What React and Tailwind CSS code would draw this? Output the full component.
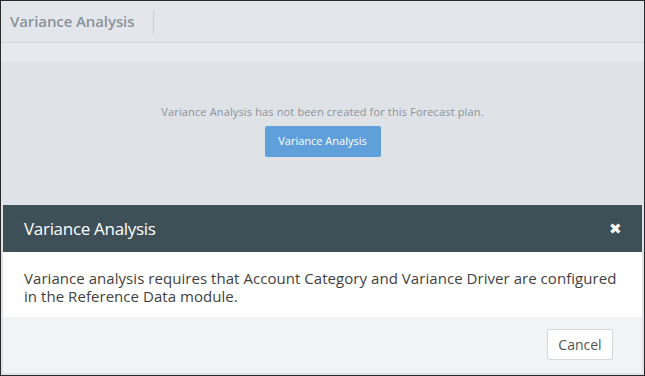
export default function App() {
  const font = { fontFamily: '"Open Sans", "Noto Sans", sans-serif' }
  return (
    <div style={font} className="relative w-[645px] h-[376px] overflow-hidden border border-[#2a2a2a] bg-[#dfe3e8]">
      <div className="flex items-center h-[42px] bg-[#e3e7eb] border-b border-[#cfd5db]">
        <h1 className="pl-[9px] pr-[19px] text-[15px] font-semibold text-[#8b939b] tracking-[-0.1px]">Variance Analysis</h1>
        <div className="w-px h-[24px] bg-[#c9cfd5]" />
      </div>
      <div className="h-[19px] bg-[#e6e9ed]" />
      <div className="flex flex-col items-center pt-[42px]">
        <p className="text-[11px] text-[#8a929a] tracking-[0.14px]">Variance Analysis has not been created for this Forecast plan.</p>
        <button className="mt-[5px] w-[116px] h-[31px] rounded-[2px] bg-[#5f9fda] text-white text-[11px]">Variance Analysis</button>
      </div>

      <div className="absolute left-[2px] right-[2px] top-[204px] bottom-[2px] flex flex-col bg-white">
        <div className="flex items-center justify-between h-[47px] bg-[#3e4f58] pl-[21px] pr-[20px]">
          <h2 className="text-[17px] text-white tracking-[-0.3px]">Variance Analysis</h2>
          <span className="text-white text-[15px] leading-none">✖</span>
        </div>
        <div className="h-[65px] pl-[21px] pt-[17px] pr-[20px] text-[15px] leading-[18px] text-[#3f3f3f] tracking-[0.05px]">
          Variance analysis requires that Account Category and Variance Driver are configured in the Reference Data module.
        </div>
        <div className="flex-1 flex items-start justify-end bg-[#f2f3f5] pt-[12px] pr-[29px]">
          <button className="w-[66px] h-[31px] bg-white border border-[#d3d6da] rounded-[2px] text-[14px] text-[#555]">Cancel</button>
        </div>
      </div>
    </div>
  )
}
